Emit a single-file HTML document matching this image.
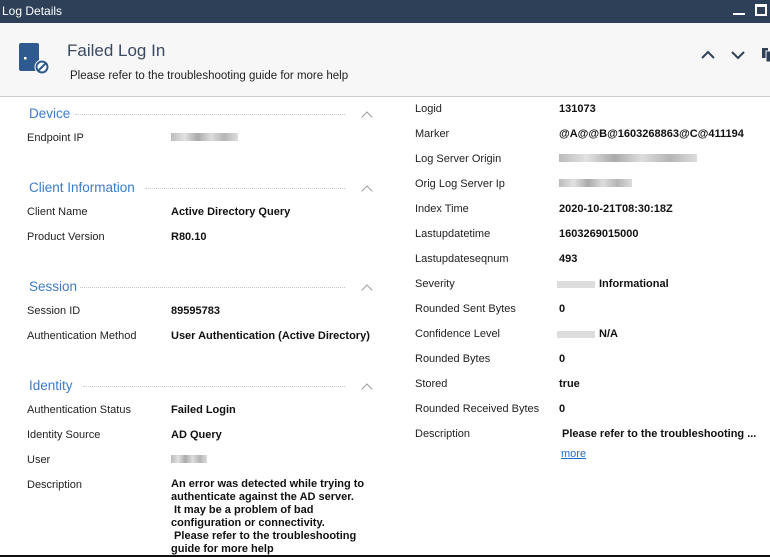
<!DOCTYPE html>
<html><head><meta charset="utf-8"><style>
*{margin:0;padding:0;box-sizing:border-box}
body{width:770px;height:557px;overflow:hidden;background:#fff;font-family:"Liberation Sans",sans-serif;font-size:11px;color:#222;position:relative}
.a{position:absolute;white-space:nowrap;line-height:14px;margin-top:1px}
.b{font-weight:bold;color:#111}
.h{color:#3d7cc9;font-size:13.5px;line-height:16px}
.dots{position:absolute;height:0;border-top:1px dotted #c8c8c8}
.blur{position:absolute;height:8px;background:linear-gradient(90deg,#bbb,#e2e2e2 20%,#aaa 40%,#ddd 60%,#b5b5b5 80%,#ddd)}
.chev{position:absolute;width:8px;height:8px;border-left:1px solid #999;border-top:1px solid #999;transform:rotate(45deg)}
</style></head><body>
<div style="position:absolute;left:0;top:0;width:770px;height:23px;background:#2e4058"></div>
<div class="a" style="left:2px;top:3px;color:#fff;font-size:12px">Log Details</div>
<div style="position:absolute;left:733px;top:13px;width:12px;height:2px;background:#fff"></div>
<div style="position:absolute;left:755px;top:4px;width:12px;height:12px;border:2px solid #fff;border-top-width:3px"></div>
<div style="position:absolute;left:0;top:23px;width:770px;height:74px;background:#f7f7f7;border-bottom:1px solid #ccc"></div>
<svg style="position:absolute;left:18px;top:42px" width="32" height="34" viewBox="0 0 32 34">
<rect x="1" y="1" width="20" height="28" rx="2" fill="#2f5a8f"/>
<rect x="6" y="15" width="2.5" height="2.5" fill="#fff"/>
<circle cx="24" cy="25" r="7.5" fill="#fff"/>
<circle cx="24" cy="25" r="5.5" fill="none" stroke="#2f5a8f" stroke-width="2"/>
<line x1="20" y1="29" x2="28" y2="21" stroke="#2f5a8f" stroke-width="2"/>
</svg>
<div class="a" style="left:67px;top:40px;font-size:17px;line-height:20px;color:#3a4a60">Failed Log In</div>
<div class="a" style="left:70px;top:68px;font-size:11.5px">Please refer to the troubleshooting guide for more help</div>
<svg style="position:absolute;left:700px;top:48px" width="70" height="14"><path d="M2 10 L8 4 L14 10" stroke="#2e4058" stroke-width="2" fill="none"/><path d="M32 4 L38 10 L44 4" stroke="#2e4058" stroke-width="2" fill="none"/><rect x="62" y="0" width="6" height="10" fill="#2e4058"/><rect x="66" y="3" width="6" height="11" fill="#2e4058" stroke="#f7f7f7" stroke-width="1"/></svg>

<div class="a h" style="left:29px;top:105px">Device</div><div class="dots" style="left:75px;right:425px;top:114px"></div><div class="chev" style="left:363px;top:113px"></div>
<div class="a" style="left:27px;top:130px">Endpoint IP</div><div class="blur" style="left:171px;top:133px;width:67px"></div>

<div class="a h" style="left:29px;top:179px">Client Information</div><div class="dots" style="left:145px;right:425px;top:188px"></div><div class="chev" style="left:363px;top:187px"></div>
<div class="a" style="left:27px;top:204px">Client Name</div><div class="a b" style="left:171px;top:204px">Active Directory Query</div>
<div class="a" style="left:27px;top:229px">Product Version</div><div class="a b" style="left:171px;top:229px">R80.10</div>

<div class="a h" style="left:29px;top:278px">Session</div><div class="dots" style="left:80px;right:425px;top:287px"></div><div class="chev" style="left:363px;top:286px"></div>
<div class="a" style="left:27px;top:303px">Session ID</div><div class="a b" style="left:171px;top:303px">89595783</div>
<div class="a" style="left:27px;top:328px">Authentication Method</div><div class="a b" style="left:171px;top:328px">User Authentication (Active Directory)</div>

<div class="a h" style="left:29px;top:377px">Identity</div><div class="dots" style="left:83px;right:425px;top:386px"></div><div class="chev" style="left:363px;top:385px"></div>
<div class="a" style="left:27px;top:402px">Authentication Status</div><div class="a b" style="left:171px;top:402px">Failed Login</div>
<div class="a" style="left:27px;top:427px">Identity Source</div><div class="a b" style="left:171px;top:427px">AD Query</div>
<div class="a" style="left:27px;top:452px">User</div><div class="blur" style="left:171px;top:455px;width:36px"></div>
<div class="a" style="left:27px;top:477px">Description</div>
<div class="a b" style="left:171px;top:477px;line-height:13px;white-space:pre">An error was detected while trying to
authenticate against the AD server.
 It may be a problem of bad
configuration or connectivity.
 Please refer to the troubleshooting
guide for more help</div>
<div style="position:absolute;left:0;top:555px;width:770px;height:2px;background:#111"></div>

<div class="a" style="left:415px;top:101px">Logid</div><div class="a b" style="left:559px;top:101px">131073</div>
<div class="a" style="left:415px;top:126px">Marker</div><div class="a b" style="left:559px;top:126px">@A@@B@1603268863@C@411194</div>
<div class="a" style="left:415px;top:151px">Log Server Origin</div><div class="blur" style="left:559px;top:154px;width:138px"></div>
<div class="a" style="left:415px;top:176px">Orig Log Server Ip</div><div class="blur" style="left:559px;top:179px;width:73px"></div>
<div class="a" style="left:415px;top:201px">Index Time</div><div class="a b" style="left:559px;top:201px">2020-10-21T08:30:18Z</div>
<div class="a" style="left:415px;top:226px">Lastupdatetime</div><div class="a b" style="left:559px;top:226px">1603269015000</div>
<div class="a" style="left:415px;top:251px">Lastupdateseqnum</div><div class="a b" style="left:559px;top:251px">493</div>
<div class="a" style="left:415px;top:276px">Severity</div><div style="position:absolute;left:557px;top:281px;width:38px;height:7px;background:#ddd"></div><div class="a b" style="left:599px;top:276px">Informational</div>
<div class="a" style="left:415px;top:301px">Rounded Sent Bytes</div><div class="a b" style="left:559px;top:301px">0</div>
<div class="a" style="left:415px;top:326px">Confidence Level</div><div style="position:absolute;left:557px;top:331px;width:38px;height:7px;background:#ddd"></div><div class="a b" style="left:599px;top:326px">N/A</div>
<div class="a" style="left:415px;top:351px">Rounded Bytes</div><div class="a b" style="left:559px;top:351px">0</div>
<div class="a" style="left:415px;top:376px">Stored</div><div class="a b" style="left:559px;top:376px">true</div>
<div class="a" style="left:415px;top:401px">Rounded Received Bytes</div><div class="a b" style="left:559px;top:401px">0</div>
<div class="a" style="left:415px;top:426px">Description</div><div class="a b" style="left:562px;top:426px">Please refer to the troubleshooting ...</div>
<div class="a" style="left:561px;top:446px;color:#1a6fd0;text-decoration:underline">more</div>
</body></html>
